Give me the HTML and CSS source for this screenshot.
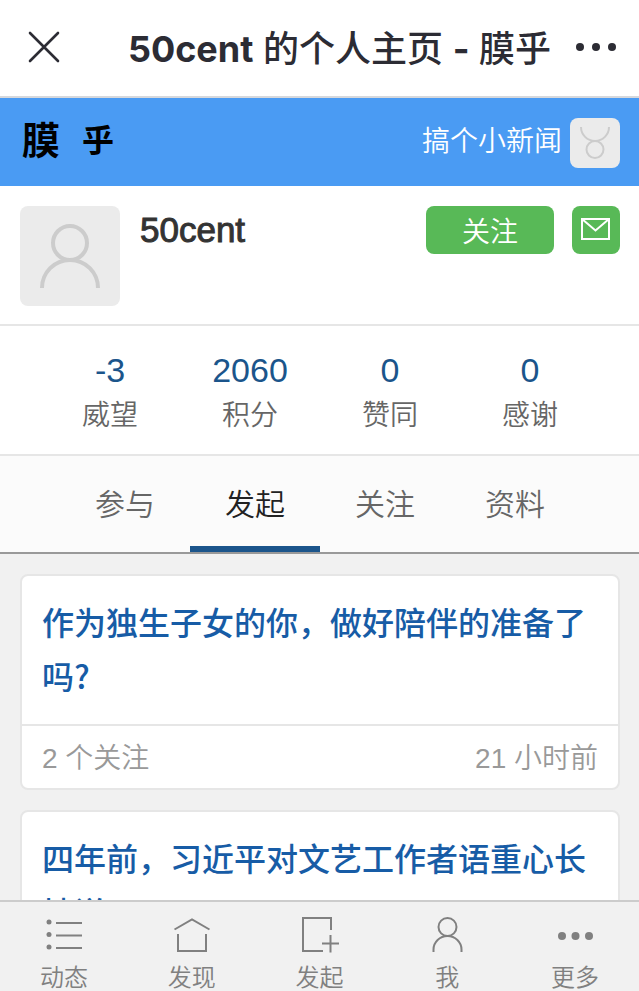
FILE: index.html
```html
<!DOCTYPE html>
<html lang="zh-CN">
<head>
<meta charset="utf-8">
<meta name="viewport" content="width=device-width, initial-scale=1">
<title>50cent 的个人主页 - 膜乎</title>
<link rel="stylesheet" href="styles.css">
</head>
<body>
<div class="app">
  <header class="titlebar">
    <button class="icon-button" type="button" aria-label="关闭">
      <svg width="32" height="32" viewBox="0 0 32 32" fill="none" stroke="#2c2c34" stroke-width="2.6" stroke-linecap="round"><path d="M2 2L30 30M30 2L2 30"/></svg>
    </button>
    <h1 class="page-title"><span class="latin">50cent</span> 的个人主页 <span class="latin">-</span> 膜乎</h1>
    <button class="icon-button" type="button" aria-label="更多选项">
      <svg width="42" height="10" viewBox="0 0 42 10" fill="#2c2c34"><circle cx="5" cy="5" r="4"/><circle cx="21" cy="5" r="4"/><circle cx="37" cy="5" r="4"/></svg>
    </button>
  </header>

  <nav class="sitebar">
    <a class="logo" href="#"><span>膜</span><span class="logo-small">乎</span></a>
    <a class="account" href="#">
      <span class="motto">搞个小新闻</span>
      <svg class="account-avatar" width="50" height="50" viewBox="0 0 50 50" fill="none" stroke="#cccccc" stroke-width="2"><circle cx="25" cy="31.500" r="8.500"/><path d="M11 9a14 14 0 0 0 28 0"/></svg>
    </a>
  </nav>

  <main class="content">
    <section class="profile">
      <svg class="avatar" width="100" height="100" viewBox="0 0 100 100" fill="none" stroke="#cccccc" stroke-width="4"><circle cx="50" cy="37" r="17"/><path d="M22 82a28 28 0 0 1 56 0"/></svg>
      <h2 class="username">50cent</h2>
      <div class="actions">
        <button class="green follow" type="button">关注</button>
        <button class="green mail" type="button" aria-label="私信">
          <svg width="30" height="26" viewBox="0 0 30 26" fill="none" stroke="#ffffff" stroke-width="2"><path d="M1 2H28V22H1ZM1 2L14.500 13.500L28 2"/></svg>
        </button>
      </div>
    </section>

    <dl class="stats">
      <div class="stat"><dt>威望</dt><dd>-3</dd></div>
      <div class="stat"><dt>积分</dt><dd>2060</dd></div>
      <div class="stat"><dt>赞同</dt><dd>0</dd></div>
      <div class="stat"><dt>感谢</dt><dd>0</dd></div>
    </dl>

    <nav class="tabs">
      <a class="tab" href="#">参与</a>
      <a class="tab active" href="#">发起</a>
      <a class="tab" href="#">关注</a>
      <a class="tab" href="#">资料</a>
    </nav>

    <section class="feed">
      <article class="card">
        <h3 class="card-title"><a href="#">作为独生子女的你，做好陪伴的准备了吗?</a></h3>
        <div class="card-meta"><span>2 个关注</span><span>21 小时前</span></div>
      </article>
      <article class="card">
        <h3 class="card-title"><a href="#">四年前，习近平对文艺工作者语重心长地说</a></h3>
      </article>
    </section>
  </main>

  <nav class="dock">
    <a class="dock-item" href="#">
      <svg width="40" height="40" viewBox="0 0 40 40" fill="none" stroke="#808080" stroke-width="2"><path d="M12 9H38M12 21.500H38M12 34H38"/><g fill="#808080" stroke="none"><circle cx="5" cy="8" r="2.500"/><circle cx="5" cy="20.500" r="2.500"/><circle cx="5" cy="33" r="2.500"/></g></svg>
      <span>动态</span>
    </a>
    <a class="dock-item" href="#">
      <svg width="40" height="40" viewBox="0 0 40 40" fill="none" stroke="#808080" stroke-width="2"><path d="M2.500 15.500L20 5.500L37.500 15.500M6 20V37H34V20"/></svg>
      <span>发现</span>
    </a>
    <a class="dock-item" href="#">
      <svg width="40" height="40" viewBox="0 0 40 40" fill="none" stroke="#808080" stroke-width="2"><path d="M32 16V4H4V37H24M31.500 21V38.500M23 29.500H40"/></svg>
      <span>发起</span>
    </a>
    <a class="dock-item" href="#">
      <svg width="40" height="40" viewBox="0 0 40 40" fill="none" stroke="#808080" stroke-width="2"><circle cx="20.500" cy="13" r="9"/><path d="M6.500 38V35.500a14 13.500 0 0 1 28 0V38"/></svg>
      <span>我</span>
    </a>
    <a class="dock-item" href="#">
      <svg width="40" height="40" viewBox="0 0 40 40" fill="#808080"><circle cx="7" cy="22" r="4"/><circle cx="20.500" cy="22" r="4"/><circle cx="34" cy="22" r="4"/></svg>
      <span>更多</span>
    </a>
  </nav>
</div>
</body>
</html>
```

FILE: styles.css
```css
* {
  box-sizing: border-box;
}

body {
  margin: 0;
  font-family: "Liberation Sans", "Noto Sans CJK SC", sans-serif;
  font-weight: 350;
  color: #333333;
  background: #f1f1f1;
}

h1, h2, h3, dl, dd {
  margin: 0;
}

a {
  color: inherit;
  text-decoration: none;
}

button {
  padding: 0;
  border: 0;
  background: none;
  font: inherit;
}

svg {
  display: block;
  flex: none;
}

.app {
  display: flex;
  flex-direction: column;
  height: 100vh;
}

.titlebar {
  flex: none;
  display: flex;
  align-items: center;
  justify-content: space-between;
  height: 98px;
  padding: 0 22px 2px 28px;
  background: #ffffff;
  border-bottom: 2px solid #d6d8dc;
}

.page-title {
  padding: 3px 0 0 44px;
  font-family: Inter, "Noto Sans CJK SC", sans-serif;
  font-size: 36px;
  font-weight: 500;
  line-height: 48px;
  color: #2c2c34;
  white-space: nowrap;
}

.latin {
  font-weight: 700;
}

.sitebar {
  flex: none;
  display: flex;
  align-items: center;
  justify-content: space-between;
  height: 88px;
  padding: 2px 19px 0 22px;
  background: #4a9bf3;
}

.logo {
  display: flex;
  align-items: center;
  gap: 22px;
  padding-bottom: 4px;
  font-size: 38px;
  font-weight: 700;
  line-height: 48px;
  color: #000000;
}

.logo-small {
  font-size: 32px;
}

.account {
  display: flex;
  align-items: center;
  gap: 8px;
  color: #ffffff;
}

.motto {
  padding-bottom: 2px;
  font-size: 28px;
  line-height: 40px;
}

.account-avatar {
  border-radius: 8px;
  background: #ebebeb;
}

.content {
  flex: 1;
  min-height: 0;
  overflow: hidden;
}

.profile {
  display: flex;
  align-items: flex-start;
  gap: 20px;
  padding: 20px 19px 18px 20px;
  background: #ffffff;
}

.avatar {
  border-radius: 8px;
  background: #ebebeb;
}

.username {
  flex: 1;
  font-size: 35px;
  font-weight: 400;
  line-height: 48px;
  -webkit-text-stroke: 1px #333333;
}

.actions {
  display: flex;
  gap: 18px;
}

.green {
  display: flex;
  align-items: center;
  justify-content: center;
  height: 48px;
  border-radius: 8px;
  background: #58b957;
  color: #ffffff;
}

.follow {
  width: 128px;
  font-size: 28px;
}

.mail {
  width: 48px;
}

.stats {
  display: flex;
  padding: 22px 39px 18px 40px;
  background: #ffffff;
  border-top: 2px solid #e6e6e6;
  border-bottom: 2px solid #e6e6e6;
}

.stat {
  flex: 1;
  display: flex;
  flex-direction: column-reverse;
  gap: 4px;
  text-align: center;
}

.stat dt {
  font-size: 28px;
  line-height: 40px;
  color: #666666;
}

.stat dd {
  font-size: 34px;
  line-height: 44px;
  color: #1b558b;
}

.tabs {
  display: flex;
  padding: 0 59px 0 60px;
  background: #fbfbfb;
  border-bottom: 2px solid #999999;
}

.tab {
  flex: 1;
  height: 96px;
  font-size: 30px;
  line-height: 97px;
  text-align: center;
  color: #666666;
}

.active {
  color: #222222;
  border-bottom: 6px solid #1b558b;
}

.feed {
  display: flex;
  flex-direction: column;
  gap: 20px;
  padding: 20px 19px 20px 20px;
}

.card {
  background: #ffffff;
  border: 2px solid #e6e6e6;
  border-radius: 8px;
}

.card-title {
  padding: 18px 20px 22px;
  font-family: "Noto Sans CJK SC", sans-serif;
  font-size: 32px;
  font-weight: 500;
  line-height: 54px;
  color: #175ca6;
}

.card-meta {
  display: flex;
  justify-content: space-between;
  padding: 13px 20px 9px;
  border-top: 2px solid #e6e6e6;
  font-size: 28px;
  line-height: 40px;
  color: #999999;
}

.dock {
  flex: none;
  display: flex;
  height: 91px;
  background: #f1f1f1;
  border-top: 2px solid #cccccc;
}

.dock-item {
  flex: 1;
  display: flex;
  flex-direction: column;
  align-items: center;
  gap: 8px;
  padding-top: 12px;
  font-size: 24px;
  line-height: 32px;
  color: #808080;
}
```
